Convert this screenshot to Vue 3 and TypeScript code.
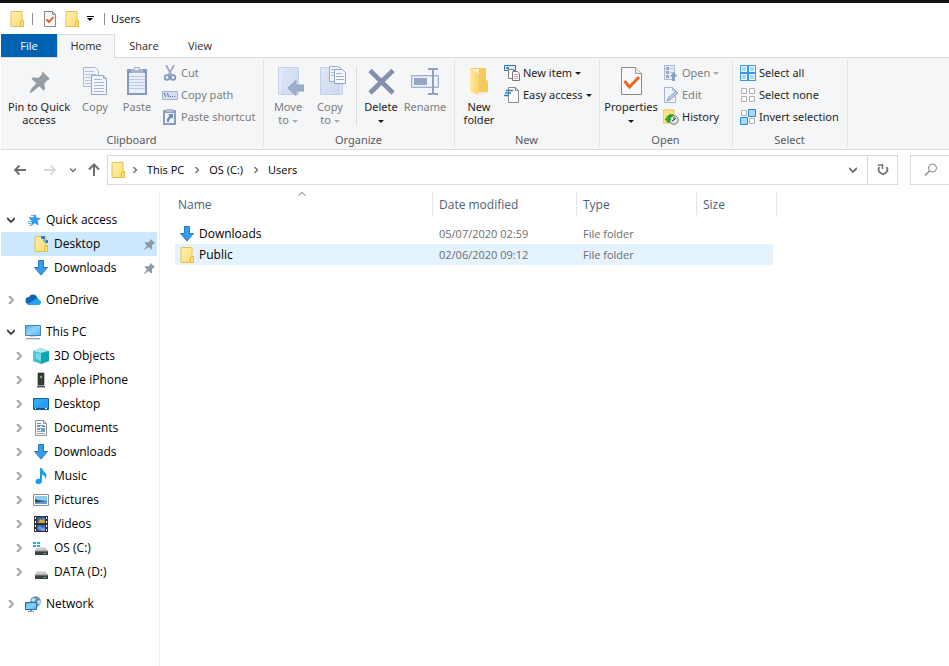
<script setup lang="ts">
interface Command {
  label: string
  icon: string
  disabled?: boolean
  menu?: boolean
  wide?: boolean
  divider?: boolean
}
interface Group {
  name: string
  size: string
  large: Command[]
  small: Command[]
}
interface Place {
  label: string
  icon: string
  level: number
  expander?: 'open' | 'closed'
  pinned?: boolean
  selected?: boolean
  first?: boolean
}
interface Entry {
  name: string
  icon: string
  modified: string
  type: string
  size: string
  active?: boolean
}

const tabs: string[] = ['File', 'Home', 'Share', 'View']

const groups: Group[] = [
  {
    name: 'Clipboard',
    size: 'clipboard',
    large: [
      { label: 'Pin to Quick access', icon: 'pin-large', wide: true },
      { label: 'Copy', icon: 'copy', disabled: true },
      { label: 'Paste', icon: 'paste', disabled: true },
    ],
    small: [
      { label: 'Cut', icon: 'cut', disabled: true },
      { label: 'Copy path', icon: 'copy-path', disabled: true },
      { label: 'Paste shortcut', icon: 'paste-shortcut', disabled: true },
    ],
  },
  {
    name: 'Organize',
    size: 'organize',
    large: [
      { label: 'Move\nto ', icon: 'move-to', disabled: true, menu: true },
      { label: 'Copy\nto ', icon: 'copy-to', disabled: true, menu: true },
      { label: 'Delete\n', icon: 'delete', menu: true, divider: true },
      { label: 'Rename', icon: 'rename', disabled: true },
    ],
    small: [],
  },
  {
    name: 'New',
    size: 'new',
    large: [{ label: 'New folder', icon: 'new-folder' }],
    small: [
      { label: 'New item', icon: 'new-item', menu: true },
      { label: 'Easy access', icon: 'easy-access', menu: true },
    ],
  },
  {
    name: 'Open',
    size: 'open',
    large: [{ label: 'Properties\n', icon: 'properties', menu: true }],
    small: [
      { label: 'Open', icon: 'open', disabled: true, menu: true },
      { label: 'Edit', icon: 'edit', disabled: true },
      { label: 'History', icon: 'history' },
    ],
  },
  {
    name: 'Select',
    size: 'select',
    large: [],
    small: [
      { label: 'Select all', icon: 'select-all' },
      { label: 'Select none', icon: 'select-none' },
      { label: 'Invert selection', icon: 'select-invert' },
    ],
  },
]

const crumbs: string[] = ['This PC', 'OS (C:)', 'Users']

const places: Place[] = [
  { label: 'Quick access', icon: 'star', level: 0, expander: 'open' },
  { label: 'Desktop', icon: 'desktop-folder', level: 1, pinned: true, selected: true },
  { label: 'Downloads', icon: 'download', level: 1, pinned: true },
  { label: 'OneDrive', icon: 'cloud', level: 0, expander: 'closed', first: true },
  { label: 'This PC', icon: 'pc', level: 0, expander: 'open', first: true },
  { label: '3D Objects', icon: 'cube', level: 1, expander: 'closed' },
  { label: 'Apple iPhone', icon: 'phone', level: 1, expander: 'closed' },
  { label: 'Desktop', icon: 'desktop', level: 1, expander: 'closed' },
  { label: 'Documents', icon: 'document', level: 1, expander: 'closed' },
  { label: 'Downloads', icon: 'download', level: 1, expander: 'closed' },
  { label: 'Music', icon: 'music', level: 1, expander: 'closed' },
  { label: 'Pictures', icon: 'picture', level: 1, expander: 'closed' },
  { label: 'Videos', icon: 'video', level: 1, expander: 'closed' },
  { label: 'OS (C:)', icon: 'drive-os', level: 1, expander: 'closed' },
  { label: 'DATA (D:)', icon: 'drive', level: 1, expander: 'closed' },
  { label: 'Network', icon: 'network', level: 0, expander: 'closed', first: true },
]

const entries: Entry[] = [
  { name: 'Downloads', icon: 'download', modified: '05/07/2020 02:59', type: 'File folder', size: '' },
  { name: 'Public', icon: 'folder', modified: '02/06/2020 09:12', type: 'File folder', size: '', active: true },
]
</script>

<template>
  <div class="window">
    <svg class="sprite" width="0" height="0" aria-hidden="true">
      <defs>
        <linearGradient id="g-folder" x1="0" y1="0" x2="1" y2="1">
          <stop offset="0" stop-color="#fff0b0" /><stop offset="1" stop-color="#ffdc74" />
        </linearGradient>
        <linearGradient id="g-fold-front" x1="0" y1="0" x2="1" y2="0">
          <stop offset="0" stop-color="#ffe9a2" /><stop offset="1" stop-color="#fbd469" />
        </linearGradient>
        <linearGradient id="g-sheet" x1="0" y1="0" x2="1" y2="1">
          <stop offset="0" stop-color="#dfe8f7" /><stop offset="1" stop-color="#cbd8ee" />
        </linearGradient>
        <linearGradient id="g-screen" x1="0" y1="0" x2="1" y2="1">
          <stop offset="0" stop-color="#4fb4f5" /><stop offset="0.5" stop-color="#8ed3ff" /><stop offset="1" stop-color="#4cb3f6" />
        </linearGradient>
      </defs>

      <symbol id="folder" viewBox="0 0 16 16">
        <path d="M2 .5h11v11h1.500v4H2z" fill="url(#g-folder)" stroke="#e8c04e" />
        <path d="M11.500 15V10.500h1.500v-1h1.500v6h-3z" fill="#ffe28a" stroke="#e8bb3f" />
      </symbol>
      <symbol id="desktop-folder" viewBox="0 0 16 16">
        <path d="M2 .5h11v11h1.500v4H2z" fill="url(#g-folder)" stroke="#e8c04e" />
        <path d="M11.500 15V10.500h1.500v-1h1.500v6h-3z" fill="#ffe28a" stroke="#e8bb3f" />
        <path d="M8 0h4v3H8zM12 4h3v3h-3z" fill="#2c7fc9" /><path d="M10 3h3v3h-3z" fill="#7fb2d8" />
      </symbol>
      <symbol id="doc-check" viewBox="0 0 16 16">
        <path d="M2.500.5h8l3 3v12h-11z" fill="#f8f8f8" stroke="#8a8a8a" /><path d="M10.500.5v3h3" fill="none" stroke="#8a8a8a" />
        <path d="M4.500 8.500 7 11 11.500 6" fill="none" stroke="#e8561c" stroke-width="1.800" />
      </symbol>

      <symbol id="pin-large" viewBox="0 0 32 32">
        <path d="M19.500 5.500 27 13l-2.500 1.200-3.300 3.500 1 5.300-1.700 1.500-4.300-4.300-4.700 4.300-4 2.500-1 -1 2.500-4 4.300-4.700L8.500 13l1.500-1.700 5.300.7 3.300-3.300z" fill="#949da4" />
      </symbol>
      <symbol id="pin" viewBox="0 0 16 16">
        <path d="m9.500 3 4.500 4-1.500.7-1.700 1.800.4 3-1 1-2.600-2.500L4 13.500l-1.500.8L3.300 13 6 9.500 3.600 7l1-1 3 .4L9 4.600z" fill="#8b99a6" />
      </symbol>
      <symbol id="copy" viewBox="0 0 32 32">
        <path d="M4.500 1.500h12l3 3v16h-15z" fill="#edf2fb" stroke="#a9b8d2" />
        <path d="M6 5.500h9M6 8.500h11M6 11.500h11M6 14.500h11M6 17.500h11" stroke="#b5c3dc" />
        <path d="M12.500 9.500h12l3 3v16h-15z" fill="#f3f6fc" stroke="#94a6c6" /><path d="M24.500 9.500v3h3" fill="none" stroke="#94a6c6" />
        <path d="M15 13.500h8M15 16.500h10M15 19.500h10M15 22.500h10M15 25.500h10" stroke="#a5b5d2" />
      </symbol>
      <symbol id="paste" viewBox="0 0 32 32">
        <path d="M6 3h20v26H6z" fill="#8599bf" /><path d="M8 7h16v20H8z" fill="#e8effa" />
        <path d="M8 10.500h16M8 13.500h16M8 16.500h16M8 19.500h16M8 22.500h16" stroke="#bccbe3" />
        <path d="M10 3h3V1h6v2h3v4H10z" fill="#a7b4cc" /><path d="M14 2h4v2h-4z" fill="#e7edf6" />
      </symbol>
      <symbol id="cut" viewBox="0 0 16 16">
        <path d="M4 0 9.500 10M12 0 6.500 10" stroke="#a0aec9" stroke-width="2" fill="none" />
        <circle cx="5" cy="12.500" r="2.300" fill="none" stroke="#8398bd" stroke-width="1.800" /><circle cx="11" cy="12.500" r="2.300" fill="none" stroke="#8398bd" stroke-width="1.800" />
      </symbol>
      <symbol id="copy-path" viewBox="0 0 16 16">
        <path d="M.5 4.500h15v8H.5z" fill="#d2ddf0" stroke="#a4b5d1" />
        <path d="m2 6 2 4M5 6l2 4" stroke="#5e77a3" fill="none" /><path d="M8 9h1v1H8zM10 9h1v1h-1zM12 9h1v1h-1z" fill="#5e77a3" />
      </symbol>
      <symbol id="paste-shortcut" viewBox="0 0 16 16">
        <path d="M1 1h13v15H1z" fill="#8b9fc4" /><path d="M3 4h9v10H3z" fill="#f0f4fb" /><path d="M4 0h7v3H4z" fill="#b1bdd2" />
        <path d="M6 5h5v5L9.500 8.500 7 11v2H5v-3l2.500-3.500z" fill="#7088b2" />
      </symbol>

      <symbol id="move-to" viewBox="-2 0 32 32">
        <path d="M4.500 1.500h20v27h-20z" fill="url(#g-sheet)" stroke="#c2d0e8" /><path d="M6 2v26" stroke="#edf2fb" />
        <path d="m14 22 8-7.500V19h8v6h-8v4.500z" fill="#9fafca" stroke="#8fa2c3" />
      </symbol>
      <symbol id="copy-to" viewBox="-2 0 32 32">
        <path d="M4.500 1.500h20v27h-20z" fill="url(#g-sheet)" stroke="#c2d0e8" /><path d="M22.500 18h4v10h-4z" fill="#d7e1f3" stroke="#c2d0e8" />
        <path d="M13.500.5h9l3 3v12h-12z" fill="#f1f5fb" stroke="#9aabc8" /><path d="M15 3.500h7M15 6.500h7M15 9.500h7" stroke="#a9b9d4" />
        <path d="M18.500 3.500h8l3 3v11h-11z" fill="#f4f7fc" stroke="#8fa2c3" /><path d="M20 7.500h6M20 10.500h8M20 13.500h8" stroke="#a0b1cf" />
      </symbol>
      <symbol id="delete" viewBox="0 0 32 32">
        <path d="M5 4.500 28 27M28 4.500 5 27" stroke="#8090ad" stroke-width="4.600" fill="none" />
      </symbol>
      <symbol id="rename" viewBox="0 0 32 32">
        <path d="M2.500 9.500h27v12h-27z" fill="#f1f5fb" stroke="#9fb2d0" /><path d="M3.500 10.500h25v10h-25z" fill="none" stroke="#cfdcef" />
        <path d="M5 12h13v7H5z" fill="#93a6c6" />
        <path d="M19 3h4l1 1 1-1h4M19 28h4l1-1 1 1h4M24 4v23" stroke="#8ea1c2" stroke-width="2" fill="none" />
      </symbol>

      <symbol id="new-folder" viewBox="0 0 32 32">
        <path d="M7 2h16v12l2 1v11H7z" fill="#f5ca5c" /><path d="M7 2 16 8v20.500L7 26z" fill="url(#g-fold-front)" /><path d="M8 3h8v5z" fill="#fff0bd" />
        <path d="M17 26h9l-8 3z" fill="#e7e7e7" />
      </symbol>
      <symbol id="new-item" viewBox="0 0 16 16">
        <path d="M.5.5h11v5H.5z" fill="#d9ecf9" stroke="#36759f" /><path d="M2 2h3v2H2z" fill="#438cc0" />
        <path d="M4.500 4.500h5v9h-5z" fill="#fff" stroke="#7b7b7b" />
        <path d="M8.500 6.500h5l2 2v7h-7z" fill="#fff" stroke="#7b7b7b" /><path d="M10 9.500h4M10 11.500h4M10 13.500h4" stroke="#dc9ca2" />
      </symbol>
      <symbol id="easy-access" viewBox="0 0 16 16">
        <path d="M4.500.5h7l3 3v12h-10z" fill="#fff" stroke="#8a8a8a" /><path d="M11.500.5v3h3" fill="none" stroke="#8a8a8a" />
        <path d="M2 3.500h7M1 6h6M0 8.500h5" stroke="#2f7db8" stroke-width="1.400" />
      </symbol>
      <symbol id="properties" viewBox="0 0 32 32">
        <path d="M6.500 1.500h14l6 6v21h-20z" fill="#f8f9fb" stroke="#8b8b8b" /><path d="M20.500 1.500v6h6" fill="#ececec" stroke="#9b9b9b" />
        <path d="m9.500 15 5 6L24 11" fill="none" stroke="#f0631f" stroke-width="3" />
      </symbol>
      <symbol id="open" viewBox="0 0 16 16">
        <path d="M1.500.5h10v14h-10z" fill="#e5ecf7" stroke="#a9b7d0" /><path d="M3 2h3v3H3zM3 6h3v3H3zM3 10h3v3H3z" fill="#98a9c6" /><path d="M7 3.500h4M7 7.500h4" stroke="#b8c5dc" />
        <path d="m10.500 7 4 4.500H12V16H9v-4.500H7z" fill="#8b9fc2" />
      </symbol>
      <symbol id="edit" viewBox="0 0 16 16">
        <path d="M1.500.5h8l3 3v12h-11z" fill="#edf2fb" stroke="#a4b5d1" /><path d="M9.500.5v3h3" fill="none" stroke="#a4b5d1" /><path d="m4 14 1-3 8-7 2 2-8 7z" fill="#b8c7df" stroke="#93a6c7" />
      </symbol>
      <symbol id="history" viewBox="0 0 16 16">
        <path d="M0 1h11v13H0z" fill="#ffe085" stroke="#e9bd42" />
        <circle cx="11" cy="11" r="4.300" fill="#dfe3e5" stroke="#777" /><path d="M11 8v3l2-2M11 11l-2 1" stroke="#444" fill="none" />
        <path d="M10 5.500C6 5 3.500 7 3.500 10H2l3.500 4L8 10H6.500C6.500 8.500 7.500 7.500 9 7.500z" fill="#1cae27" stroke="#108218" stroke-width=".5" />
      </symbol>
      <symbol id="select-all" viewBox="0 0 16 16">
        <path d="M0 0h16v16H0z" fill="#3a99e6" /><path d="M1 1h6v6H1zM9 1h6v6H9zM1 9h6v6H1zM9 9h6v6H9z" fill="#eaf6ff" /><path d="M2 2h4v4H2zM10 2h4v4h-4zM2 10h4v4H2zM10 10h4v4h-4z" fill="#a6d8fb" />
      </symbol>
      <symbol id="select-none" viewBox="0 0 16 16">
        <path d="M1.500 1.500h5v5h-5zM9.500 1.500h5v5h-5zM1.500 9.500h5v5h-5zM9.500 9.500h5v5h-5z" fill="#fff" stroke="#b1b1b1" />
      </symbol>
      <symbol id="select-invert" viewBox="0 0 16 16">
        <path d="M1.500 1.500h5v5h-5zM9.500 9.500h5v5h-5z" fill="#fff" stroke="#b1b1b1" /><path d="M8.500.5h7v7h-7zM.5 8.500h7v7h-7z" fill="#a9dafb" stroke="#218ae0" />
      </symbol>

      <symbol id="star" viewBox="0 0 16 16">
        <path d="m10 2.500 1.300 3.700 4 .1-3.100 2.500 1.100 4.200L10 10.700 6.300 13.300l1.300-4.100L4.500 6.500l3.900-.2z" fill="#2d9ff0" stroke="#1d80cd" stroke-width=".6" />
        <path d="M6 3.500h3M4 5.500h4M3 9.500h4M3 11.500h3M4 13.500h2" stroke="#62b5ee" />
      </symbol>
      <symbol id="download" viewBox="0 0 16 16">
        <path d="M5.500.5h5v7h4L8 15 1.500 7.500h4z" fill="#3a9bea" stroke="#2179c4" />
      </symbol>
      <symbol id="cloud" viewBox="0 0 16 16">
        <path d="M4 12a3.500 3.500 0 0 1 0-7 4.500 4.500 0 0 1 8 0l1.500 3z" fill="#0a63b8" /><path d="M9 6.500C10.500 5 13 5.500 13.500 7.500L9 10z" fill="#1583da" />
        <path d="M2 12.500 9 8l4 -.5c4 .3 4 5.500.5 5.500H3.500C2.800 13 2.300 12.800 2 12.500z" fill="#28a5ec" />
      </symbol>
      <symbol id="pc" viewBox="0 0 16 16">
        <path d="M.5 1.500h15v10H.5z" fill="url(#g-screen)" stroke="#4a7fa8" /><path d="M5 12h6v1H5z" fill="#ccd8e2" /><path d="M1 14h14v1H1z" fill="#91a5b8" /><path d="M0 15h16v1H0z" fill="#dbe2e8" />
      </symbol>
      <symbol id="cube" viewBox="0 0 16 16">
        <path d="m0 3 8-3 8 3v10l-8 3-8-3z" fill="#36bccb" /><path d="m0 3 8-3 8 3-8 2z" fill="#a9e9ee" /><path d="M8 5 16 3v10l-8 3z" fill="#12a3b8" /><path d="M3 4.500 8 6v7l-5-2z" fill="#75dbe4" /><path d="M0 3 3 4.500V11l-3 2z" fill="#4acbd8" />
      </symbol>
      <symbol id="phone" viewBox="0 0 16 16">
        <path d="M5 1h6v12H5z" fill="#3b3b3b" stroke="#222" stroke-width=".6" /><path d="M7 4h2v2H7z" fill="#26de48" /><path d="M4 14h8v1.500H4z" fill="#555" /><path d="M5 13h6v1H5z" fill="#999" />
      </symbol>
      <symbol id="desktop" viewBox="0 0 16 16">
        <path d="M.5 2.500h15v11H.5z" fill="#23a0f6" stroke="#155f97" /><path d="M1 3 15 3 1 11z" fill="#42b1ff" opacity=".5" /><path d="M1 12h14v1H1z" fill="#17517d" /><path d="M2 12h1v1H2zM12 12h2v1h-2z" fill="#fff" />
      </symbol>
      <symbol id="document" viewBox="0 0 16 16">
        <path d="M2.500.5h8l3 3v12h-11z" fill="#fff" stroke="#929292" /><path d="M10.500.5v3h3" fill="none" stroke="#929292" />
        <path d="M4 3.500h4M4 6.500h3M9 6.500h3M4 9.500h3" stroke="#4790cb" /><path d="M4 5.500h8M4 8.500h8M4 11.500h8M4 13.500h8" stroke="#8da3b5" /><path d="M8 8h4v3H8z" fill="#619fca" />
      </symbol>
      <symbol id="music" viewBox="0 0 16 16">
        <path d="M7 0h2c.3 3 4 4.500 4.500 7 .2 1.600-.5 3-1.500 4 .5-2.500-1-4-3-4.500V13c0 4-6.500 4-6.500.5 0-2.200 2.500-3.200 4.500-2.500z" fill="#169cf0" />
      </symbol>
      <symbol id="picture" viewBox="0 0 16 16">
        <path d="M.5 2.500h15v11H.5z" fill="#fff" stroke="#919191" /><path d="M2 4h12v8H2z" fill="#8fcbf5" /><path d="M2 7.500 6 8l8 1v2H2z" fill="#2c7090" /><path d="M2 10.500 14 9.500V12H2z" fill="#5c9ddb" /><path d="M2 7 6 9l3 1H2z" fill="#1c4e3c" />
      </symbol>
      <symbol id="video" viewBox="0 0 16 16">
        <path d="M1 0h14v16H1z" fill="#303030" /><path d="M4 1h8v6H4z" fill="#2c64bd" /><path d="M4 9h8v6H4z" fill="#2c64bd" /><path d="m5 7 2-4 2 1 2-2 1 5z" fill="#d5a82c" /><path d="m4 12 3-2 2 2 3-1v4H9z" fill="#759be0" />
        <path d="M2 1h1v2H2zM2 5h1v2H2zM2 9h1v2H2zM2 13h1v2H2zM13 1h1v2h-1zM13 5h1v2h-1zM13 9h1v2h-1zM13 13h1v2h-1z" fill="#fff" />
      </symbol>
      <symbol id="drive" viewBox="0 0 16 16">
        <path d="M3.500 7.500h9L15 11H2z" fill="#c9c9c9" /><path d="M2 11h13v4H2z" fill="#3e4041" /><path d="M11 13h2v1h-2z" fill="#24e454" /><path d="M2 11h13" stroke="#909090" />
      </symbol>
      <symbol id="drive-os" viewBox="0 0 16 16">
        <path d="M3.500 7.500h9L15 11H2z" fill="#c9c9c9" /><path d="M2 11h13v4H2z" fill="#3e4041" /><path d="M11 13h2v1h-2z" fill="#24e454" /><path d="M2 11h13" stroke="#909090" />
        <path d="M0 2h7v6H0z" fill="#fff" /><path d="M0 2h3v2H0zM4 2h3v2H4zM0 5h3v2H0zM4 5h3v2H4z" fill="#13b5ee" />
      </symbol>
      <symbol id="network" viewBox="0 0 16 16">
        <circle cx="10.500" cy="5.500" r="5.300" fill="#5d8fae" /><path d="M8 1.500 11 3 9 6 6 5zM12 5l3-1 .5 3L13 9z" fill="#c3dce9" />
        <path d="M.5 6.500h11v7H.5z" fill="url(#g-screen)" stroke="#236da0" /><path d="M3 15h6v1H3zM5 14h2v1H5z" fill="#8299a9" />
      </symbol>

      <symbol id="arrow-left" viewBox="0 0 16 16"><path d="M14 8H3M7.500 3.500 3 8l4.500 4.500" fill="none" stroke="currentColor" stroke-width="1.800" /></symbol>
      <symbol id="arrow-right" viewBox="0 0 16 16"><path d="M2 8h11M8.500 3.500 13 8l-4.500 4.500" fill="none" stroke="currentColor" stroke-width="1.800" /></symbol>
      <symbol id="arrow-up" viewBox="0 0 16 16"><path d="M8 14V3M3 7.500 8 2.500l5 5" fill="none" stroke="currentColor" stroke-width="2" /></symbol>
      <symbol id="chevron-right" viewBox="0 0 8 8"><path d="m2 0 4 4-4 4" fill="none" stroke="currentColor" stroke-width="1.800" /></symbol>
      <symbol id="chevron-down" viewBox="0 0 8 8"><path d="m0 2 4 4 4-4" fill="none" stroke="currentColor" stroke-width="1.800" /></symbol>
      <symbol id="chevron-up" viewBox="0 0 8 4"><path d="m.5 3.500 3.500-3 3.500 3" fill="none" stroke="currentColor" /></symbol>
      <symbol id="refresh" viewBox="0 0 12 12"><path d="M2.500 3A4.300 4.300 0 1 0 9.500 3" fill="none" stroke="currentColor" stroke-width="1.800" /><path d="M1 1h5M5.500 0v5" fill="none" stroke="currentColor" stroke-width="1.500" /></symbol>
      <symbol id="search" viewBox="0 0 14 14"><circle cx="8.500" cy="5" r="4" fill="none" stroke="#7d8296" /><path d="M5.500 8 1 12.500" stroke="#8d8088" stroke-width="1.200" /></symbol>
    </svg>

    <header class="titlebar">
      <svg class="icon"><use href="#folder" /></svg>
      <span class="bar"></span>
      <button class="plain" aria-label="Properties"><svg class="icon"><use href="#doc-check" /></svg></button>
      <button class="plain" aria-label="New folder"><svg class="icon"><use href="#folder" /></svg></button>
      <button class="plain customise" aria-label="Customise toolbar"><i class="overline"></i><i class="caret"></i></button>
      <span class="bar"></span>
      <h1>Users</h1>
    </header>

    <nav class="tabs" aria-label="Ribbon tabs">
      <button v-for="tab in tabs" :key="tab" class="tab" :class="{ file: tab === 'File', current: tab === 'Home' }">{{ tab }}</button>
    </nav>

    <section class="ribbon">
      <div v-for="group in groups" :key="group.name" class="group" :class="group.size">
        <div class="commands">
          <template v-for="command in group.large" :key="command.label">
            <span v-if="command.divider" class="divider"></span>
            <button class="large" :class="{ wide: command.wide }" :disabled="command.disabled">
              <svg class="icon-large"><use :href="'#' + command.icon" /></svg>
              <span class="caption">{{ command.label }}<i v-if="command.menu" class="caret"></i></span>
            </button>
          </template>
          <div v-if="group.small.length" class="stack">
            <button v-for="command in group.small" :key="command.label" class="small" :disabled="command.disabled">
              <svg class="icon"><use :href="'#' + command.icon" /></svg>
              <span>{{ command.label }}</span>
              <i v-if="command.menu" class="caret"></i>
            </button>
          </div>
        </div>
        <div class="group-name">{{ group.name }}</div>
      </div>
    </section>

    <div class="location">
      <div class="history">
        <button class="plain" aria-label="Back"><svg class="icon"><use href="#arrow-left" /></svg></button>
        <button class="plain" aria-label="Forward" disabled><svg class="icon"><use href="#arrow-right" /></svg></button>
        <button class="plain recent" aria-label="Recent locations"><svg class="chevron"><use href="#chevron-down" /></svg></button>
        <button class="plain" aria-label="Up"><svg class="icon"><use href="#arrow-up" /></svg></button>
      </div>
      <div class="address">
        <svg class="icon"><use href="#folder" /></svg>
        <template v-for="crumb in crumbs" :key="crumb">
          <svg class="chevron"><use href="#chevron-right" /></svg>
          <a href="#">{{ crumb }}</a>
        </template>
        <button class="plain previous" aria-label="Previous locations"><svg class="chevron big"><use href="#chevron-down" /></svg></button>
        <button class="plain reload" aria-label="Refresh"><svg class="icon-refresh"><use href="#refresh" /></svg></button>
      </div>
      <label class="search">
        <svg class="icon-search"><use href="#search" /></svg>
        <input type="text" aria-label="Search Users" />
      </label>
    </div>

    <div class="content">
      <nav class="tree" aria-label="Folders">
        <ul>
          <li v-for="(place, index) in places" :key="index" :class="{ nested: place.level, first: place.first, selected: place.selected }">
            <button v-if="place.expander" class="plain expander" :class="place.expander" :aria-label="'Toggle ' + place.label">
              <svg class="chevron big"><use :href="place.expander === 'open' ? '#chevron-down' : '#chevron-right'" /></svg>
            </button>
            <span v-else class="expander"></span>
            <a href="#">
              <svg class="icon"><use :href="'#' + place.icon" /></svg>
              <span>{{ place.label }}</span>
            </a>
            <svg v-if="place.pinned" class="icon"><use href="#pin" /></svg>
          </li>
        </ul>
      </nav>

      <main class="files">
        <table>
          <colgroup><col class="c-name" /><col class="c-date" /><col class="c-type" /><col class="c-size" /></colgroup>
          <thead>
            <tr>
              <th scope="col">Name<svg class="sort"><use href="#chevron-up" /></svg></th>
              <th scope="col">Date modified</th>
              <th scope="col">Type</th>
              <th scope="col">Size</th>
            </tr>
          </thead>
          <tbody>
            <tr v-for="entry in entries" :key="entry.name" :class="{ active: entry.active }">
              <td><a href="#" class="entry"><svg class="icon"><use :href="'#' + entry.icon" /></svg>{{ entry.name }}</a></td>
              <td>{{ entry.modified }}</td>
              <td>{{ entry.type }}</td>
              <td>{{ entry.size }}</td>
            </tr>
          </tbody>
        </table>
      </main>
    </div>
  </div>
</template>

<style>
body {
  margin: 0;
  background: #fff;
}
</style>

<style scoped>
.window {
  display: flex;
  flex-direction: column;
  min-height: 100vh;
  box-sizing: border-box;
  border-top: 3px solid #121214;
  padding-left: 1px;
  overflow: hidden;
  background: #fff;
  color: #000;
  font: 12px/16px "Open Sans", "Noto Sans", sans-serif;
}
.window * {
  box-sizing: border-box;
}
.sprite {
  position: absolute;
}
button,
input {
  font: inherit;
  color: inherit;
  border: 0;
  padding: 0;
  background: none;
}
a {
  color: inherit;
  text-decoration: none;
}
svg {
  display: block;
  flex: none;
}
.icon {
  width: 16px;
  height: 16px;
}
.icon-large {
  width: 32px;
  height: 32px;
}
.chevron {
  width: 6px;
  height: 6px;
  color: #6f6f6f;
  overflow: visible;
}
.chevron.big {
  width: 8px;
  height: 8px;
}
.caret {
  display: inline-block;
  border: 3px solid transparent;
  border-top-color: currentColor;
  border-bottom: 0;
  vertical-align: middle;
}
.plain {
  display: flex;
  align-items: center;
  justify-content: center;
}

.titlebar {
  display: flex;
  align-items: center;
  height: 31px;
  padding-left: 8px;
}
.bar {
  width: 1px;
  height: 12px;
  margin: 0 6px 0 7px;
  background: #8f8f8f;
}
.titlebar .plain {
  width: 22px;
}
.titlebar .customise {
  flex-direction: column;
  gap: 1px;
  width: 14px;
}
.overline {
  width: 7px;
  height: 1px;
  background: #000;
}
h1 {
  margin: 0;
  font-size: 11px;
  font-weight: 400;
}

.tabs {
  display: flex;
  height: 23px;
  font-size: 11px;
}
.tab {
  width: 56px;
  height: 23px;
  color: #2b2b2b;
}
.tab.file {
  background: #0063b1;
  color: #fff;
}
.tab.current {
  width: 58px;
  height: 24px;
  margin-right: 1px;
  padding-bottom: 2px;
  border: 1px solid #dadbdc;
  border-bottom: 0;
  background: #f5f6f7;
  z-index: 1;
}

.ribbon {
  display: flex;
  height: 93px;
  padding: 2px 0 3px;
  border: solid #dadbdc;
  border-width: 1px 0;
  background: #f5f6f7;
  font-family: "Noto Sans", "Open Sans", sans-serif;
  font-size: 11px;
}
.group {
  display: flex;
  flex-direction: column;
  justify-content: space-between;
  padding: 2px 4px 0 3px;
  border-right: 1px solid #e2e3e4;
}
.commands {
  display: flex;
}
.large {
  display: flex;
  flex-direction: column;
  align-items: center;
  gap: 2px;
  width: 42px;
  padding-top: 4px;
  line-height: 13px;
  color: #1e1e1e;
}
.large.wide {
  width: 70px;
}
.open .large {
  width: 56px;
}
.caption {
  white-space: pre-wrap;
}
.small {
  display: flex;
  align-items: center;
  gap: 3px;
  height: 22px;
  color: #1e1e1e;
  white-space: nowrap;
}
.large:disabled,
.small:disabled {
  color: #7c7c7c;
}
.large:disabled .caret,
.small:disabled .caret {
  color: #adadad;
}
.stack {
  padding-left: 4px;
}
.divider {
  width: 1px;
  margin: 4px 2px 0 5px;
  background: #dcdddf;
}
.divider ~ .large {
  width: 44px;
}
.group-name {
  text-align: center;
  line-height: 13px;
  color: #5a5a5a;
}
.clipboard {
  width: 263px;
}
.organize {
  width: 191px;
}
.new {
  width: 145px;
}
.open {
  width: 133px;
}
.select {
  width: 115px;
}

.location {
  display: flex;
  align-items: center;
  height: 42px;
  padding: 0 0 2px;
}
.history {
  display: flex;
  padding: 0 5px 0 11px;
  color: #6e6e6e;
}
.history .plain {
  height: 28px;
}
.history .plain + .plain {
  margin-left: 14px;
}
.history .plain + .recent {
  margin-left: 12px;
}
.history .recent + .plain {
  margin-left: 10px;
}
.history .plain:disabled {
  color: #d8d8d8;
}
.address {
  display: flex;
  flex: 1;
  align-items: center;
  height: 30px;
  padding-left: 2px;
  border: 1px solid #d9d9d9;
  font-size: 11px;
}
.address > .chevron {
  margin: 0 9px 0 10px;
}
.address > .icon + .chevron {
  margin-left: 6px;
}
.previous {
  width: 28px;
  height: 28px;
  margin-left: auto;
}
.reload {
  width: 30px;
  height: 28px;
  border-left: 1px solid #d9d9d9;
  color: #757575;
}
.icon-refresh {
  width: 12px;
  height: 12px;
}
.search {
  display: flex;
  align-items: center;
  width: 39px;
  height: 30px;
  margin-left: 12px;
  padding-left: 13px;
  border: 1px solid #d9d9d9;
  border-right: 0;
}
.icon-search {
  width: 14px;
  height: 14px;
}
.search input {
  flex: 1;
  min-width: 0;
}

.content {
  display: flex;
  flex: 1;
}
.tree {
  width: 159px;
  padding: 16px 2px 0 0;
  border-right: 1px solid #f0f0f0;
}
ul {
  margin: 0;
  padding: 0;
  list-style: none;
}
li {
  display: flex;
  align-items: center;
  height: 24px;
}
li.nested {
  padding-left: 8px;
}
li.first {
  margin-top: 8px;
}
li.selected {
  background: #cce8ff;
}
li a {
  display: flex;
  flex: 1;
  align-items: center;
  gap: 5px;
  white-space: nowrap;
}
.expander {
  width: 20px;
  height: 24px;
  margin-right: 4px;
}
.expander .chevron {
  color: #a0a0a0;
}
.expander.open .chevron {
  color: #404040;
}

.files {
  flex: 1;
  padding-left: 15px;
}
table {
  table-layout: fixed;
  width: 602px;
  border-spacing: 0;
}
.c-name {
  width: 258px;
}
.c-date {
  width: 144px;
}
.c-type {
  width: 120px;
}
.c-size {
  width: 80px;
}
th {
  position: relative;
  height: 25px;
  padding: 0 0 0 6px;
  border-right: 1px solid #e5e5e5;
  font-weight: 400;
  text-align: left;
  color: #4c607a;
}
th:first-child {
  padding-left: 3px;
}
.sort {
  position: absolute;
  top: 0;
  left: 48%;
  width: 8px;
  height: 4px;
  color: #6f6f6f;
}
tbody::before {
  content: "";
  display: block;
  height: 6px;
}
td {
  height: 21px;
  padding: 0 0 0 6px;
  color: #6d6d6d;
  font-size: 11px;
}
td:first-child {
  padding-left: 4px;
  font-size: 12px;
}
td:last-child {
  border-right: 4px solid #fff;
  background-clip: padding-box;
}
.active td {
  background-color: #e5f3ff;
}
.entry {
  display: flex;
  align-items: center;
  gap: 4px;
  color: #000;
}
</style>
